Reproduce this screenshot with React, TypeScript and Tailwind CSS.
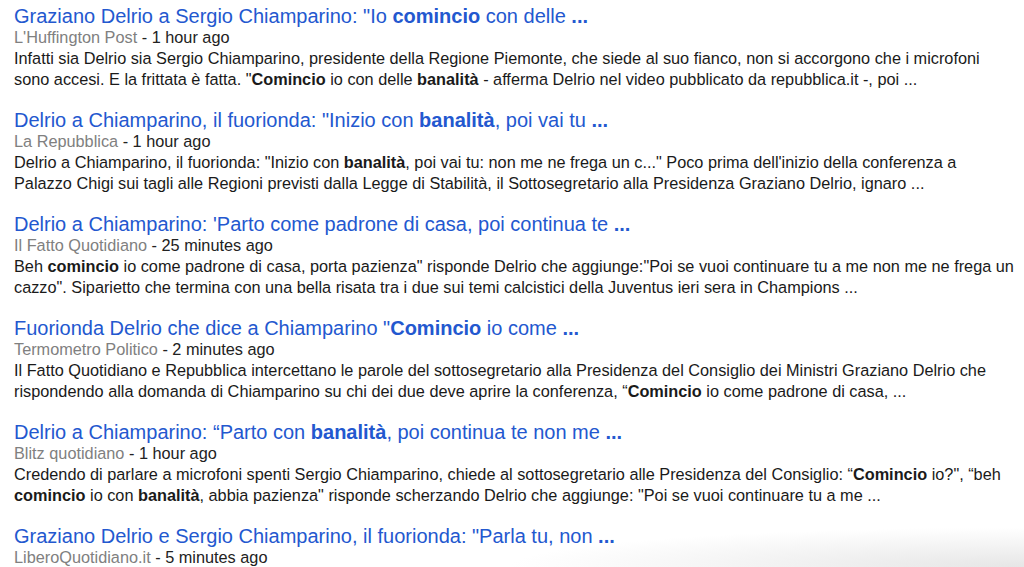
import React from 'react';

type Part = string | { b: string };

interface NewsItem {
  title: Part[];
  source: string;
  time: string;
  lines: Part[][];
}

const NEWS: NewsItem[] = [
  {
    title: ['Graziano Delrio a Sergio Chiamparino: "Io ', { b: 'comincio' }, ' con delle ', { b: '...' }],
    source: "L'Huffington Post",
    time: '1 hour ago',
    lines: [
      ['Infatti sia Delrio sia Sergio Chiamparino, presidente della Regione Piemonte, che siede al suo fianco, non si accorgono che i microfoni'],
      ['sono accesi. E la frittata è fatta. "', { b: 'Comincio' }, ' io con delle ', { b: 'banalità' }, ' - afferma Delrio nel video pubblicato da repubblica.it -, poi ...'],
    ],
  },
  {
    title: ['Delrio a Chiamparino, il fuorionda: "Inizio con ', { b: 'banalità' }, ', poi vai tu ', { b: '...' }],
    source: 'La Repubblica',
    time: '1 hour ago',
    lines: [
      ['Delrio a Chiamparino, il fuorionda: "Inizio con ', { b: 'banalità' }, ', poi vai tu: non me ne frega un c..." Poco prima dell\'inizio della conferenza a'],
      ['Palazzo Chigi sui tagli alle Regioni previsti dalla Legge di Stabilità, il Sottosegretario alla Presidenza Graziano Delrio, ignaro ...'],
    ],
  },
  {
    title: ["Delrio a Chiamparino: 'Parto come padrone di casa, poi continua te ", { b: '...' }],
    source: 'Il Fatto Quotidiano',
    time: '25 minutes ago',
    lines: [
      ['Beh ', { b: 'comincio' }, ' io come padrone di casa, porta pazienza" risponde Delrio che aggiunge:"Poi se vuoi continuare tu a me non me ne frega un'],
      ['cazzo". Siparietto che termina con una bella risata tra i due sui temi calcistici della Juventus ieri sera in Champions ...'],
    ],
  },
  {
    title: ['Fuorionda Delrio che dice a Chiamparino "', { b: 'Comincio' }, ' io come ', { b: '...' }],
    source: 'Termometro Politico',
    time: '2 minutes ago',
    lines: [
      ['Il Fatto Quotidiano e Repubblica intercettano le parole del sottosegretario alla Presidenza del Consiglio dei Ministri Graziano Delrio che'],
      ['rispondendo alla domanda di Chiamparino su chi dei due deve aprire la conferenza, “', { b: 'Comincio' }, ' io come padrone di casa, ...'],
    ],
  },
  {
    title: ['Delrio a Chiamparino: “Parto con ', { b: 'banalità' }, ', poi continua te non me ', { b: '...' }],
    source: 'Blitz quotidiano',
    time: '1 hour ago',
    lines: [
      ['Credendo di parlare a microfoni spenti Sergio Chiamparino, chiede al sottosegretario alle Presidenza del Consiglio: “', { b: 'Comincio' }, ' io?", “beh'],
      [{ b: 'comincio' }, ' io con ', { b: 'banalità' }, ', abbia pazienza" risponde scherzando Delrio che aggiunge: "Poi se vuoi continuare tu a me ...'],
    ],
  },
  {
    title: ['Graziano Delrio e Sergio Chiamparino, il fuorionda: "Parla tu, non ', { b: '...' }],
    source: 'LiberoQuotidiano.it',
    time: '5 minutes ago',
    lines: [],
  },
];

function Rich({ parts }: { parts: Part[] }) {
  return (
    <>
      {parts.map((p, i) =>
        typeof p === 'string' ? <span key={i}>{p}</span> : <b key={i} className="font-bold">{p.b}</b>
      )}
    </>
  );
}

export default function App() {
  return (
    <div
      className="relative w-[1024px] h-[567px] overflow-hidden bg-white pl-[14px] pt-[5px] flex flex-col gap-[19px]"
      style={{ fontFamily: '"Liberation Sans", Arial, sans-serif' }}
    >
      {NEWS.map((item, idx) => (
        <div key={idx} className="flex flex-col">
          <div className="text-[20px] leading-[22px] text-[#2358cf] whitespace-nowrap">
            <Rich parts={item.title} />
          </div>
          <div className="text-[16.3px] leading-[21px] whitespace-nowrap">
            <span className="text-[#808080]">{item.source}</span>
            <span className="text-[#222]"> - {item.time}</span>
          </div>
          {item.lines.map((line, li) => (
            <div key={li} className="text-[16.3px] leading-[21px] text-[#1a1a1a] whitespace-nowrap">
              <Rich parts={line} />
            </div>
          ))}
        </div>
      ))}
      {/* faint shadow at the lower right edge of the capture */}
      <div className="pointer-events-none absolute bottom-0 right-0 h-[40px] w-[520px] bg-[radial-gradient(ellipse_at_bottom_right,#e6e6e6_0%,rgba(255,255,255,0)_70%)]" />
    </div>
  );
}
